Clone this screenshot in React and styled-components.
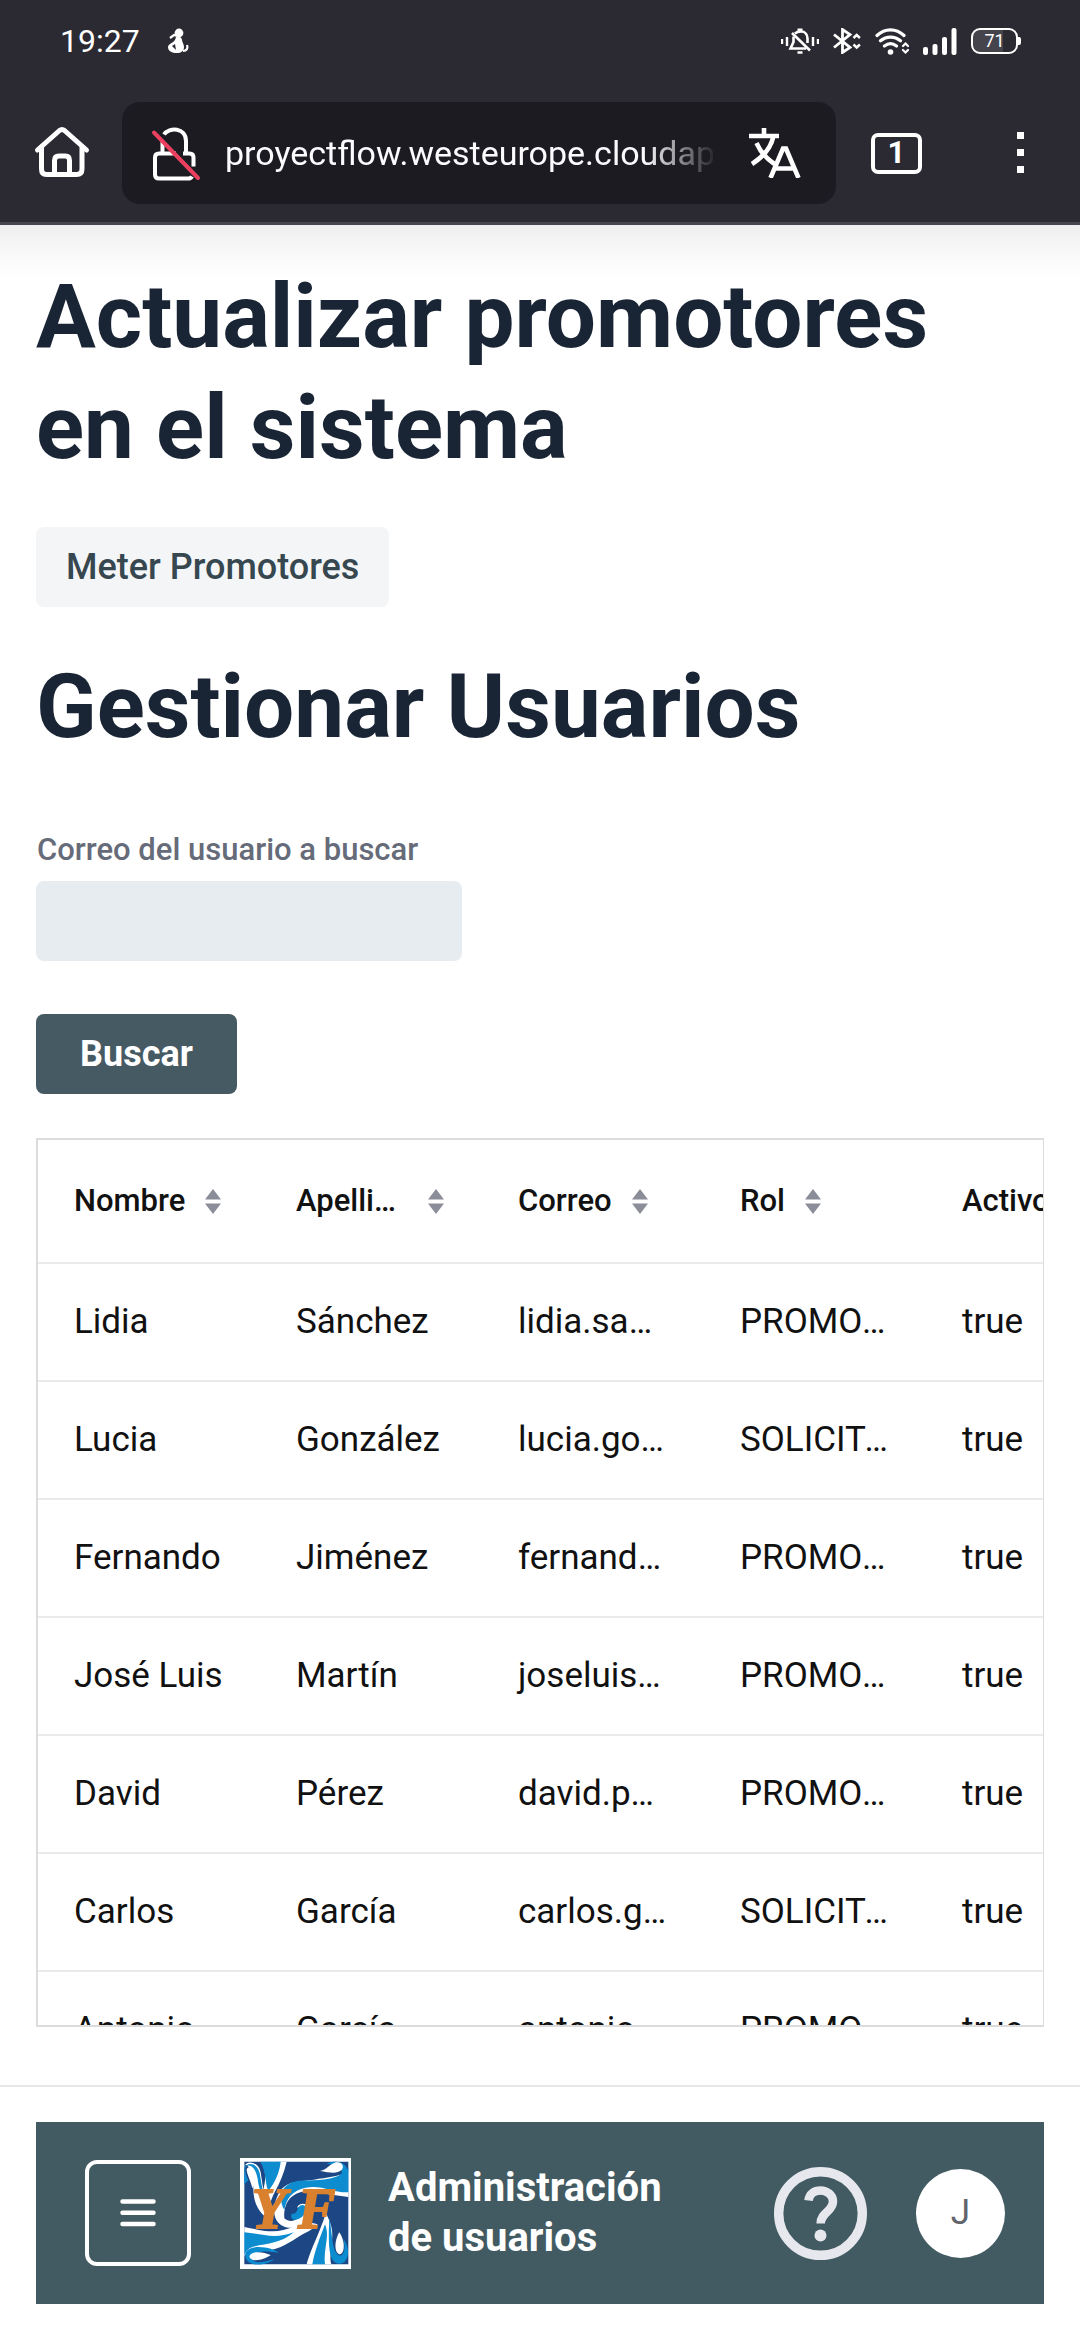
import React from "react";
import styled, { createGlobalStyle } from "styled-components";

const GlobalStyle = createGlobalStyle`
  *, *::before, *::after { box-sizing: border-box; }
  html, body { margin: 0; padding: 0; }
  body {
    background: #fff;
    color: #111;
    font-family: Roboto, "Noto Sans", sans-serif;
  }
  button, input { font-family: inherit; margin: 0; }
`;

const Screen = styled.div`
  display: flex;
  flex-direction: column;
  height: 100vh;
  overflow: hidden;
`;

/* Browser chrome */
const Chrome = styled.header`
  flex: none;
  background: #2b2a33;
  border-bottom: 3px solid #46454d;
  color: #fff;
`;

const StatusBar = styled.div`
  display: flex;
  align-items: center;
  justify-content: space-between;
  height: 82px;
  padding: 0 59px 0 60px;
`;

const StatusGroup = styled.div`
  display: flex;
  align-items: center;
  gap: ${(p) => p.$gap}px;
`;

const Clock = styled.time`
  font-size: 32px;
  line-height: 40px;
`;

const Battery = styled.span`
  display: flex;
  align-items: center;
  &::after {
    content: "";
    width: 3px;
    height: 8px;
    background: #fff;
    border-radius: 0 2px 2px 0;
  }
`;

const BatteryCell = styled.span`
  display: flex;
  align-items: center;
  justify-content: center;
  width: 47px;
  height: 26px;
  border: 2px solid #fff;
  border-radius: 9px;
  background: linear-gradient(90deg, #45444c 70%, #2b2a33 70%);
  font-size: 18px;
  line-height: 20px;
`;

const Toolbar = styled.div`
  display: flex;
  align-items: center;
  padding: 20px 55px 18px 32px;
`;

const IconButton = styled.button`
  display: flex;
  flex: none;
  align-items: center;
  justify-content: center;
  padding: 0;
  border: 0;
  background: none;
  color: inherit;
`;

const AddressBar = styled.div`
  display: flex;
  flex: 1;
  align-items: center;
  min-width: 0;
  height: 102px;
  margin: 0 35px 0 30px;
  padding: 0 35px 0 28px;
  border-radius: 18px;
  background: #1c1b22;
`;

const AddressInput = styled.input`
  flex: 1;
  min-width: 0;
  margin: 0 36px 0 23px;
  padding: 0;
  border: 0;
  outline: 0;
  background: none;
  color: #fbfbfe;
  font-size: 34px;
  line-height: 44px;
  mask-image: linear-gradient(90deg, #000 86%, transparent 101%);
`;

const TabButton = styled(IconButton)`
  width: 51px;
  height: 41px;
  margin-right: 95px;
  border: 4px solid #fff;
  border-radius: 7px;
  font-size: 31px;
  font-weight: 700;
  line-height: 32px;
`;

/* Page */
const Main = styled.main`
  display: flex;
  flex: 1;
  flex-direction: column;
  align-items: flex-start;
  min-height: 0;
  padding: 36px 36px 58px;
  background: linear-gradient(#eee 0, #f6f6f6 20px, #fcfcfc 40px, #fff 56px);
`;

const Title = styled.h1`
  margin: 0;
  color: #192434;
  font-size: 89px;
  font-weight: 700;
  line-height: 111px;
`;

const Button = styled.button`
  height: 80px;
  padding: 0 ${(p) => (p.$primary ? 44 : 30)}px;
  border: 0;
  border-radius: 8px;
  background: ${(p) => (p.$primary ? "#465a64" : "#f3f5f7")};
  color: ${(p) => (p.$primary ? "#fff" : "#37474f")};
  font-size: 36px;
  font-weight: ${(p) => (p.$primary ? 700 : 500)};
  line-height: 44px;
`;

const ImportForm = styled.div`
  margin: 44px 0;
`;

const SearchForm = styled.form`
  display: flex;
  flex-direction: column;
  align-items: flex-start;
  margin: 68px 0 44px;
`;

const Label = styled.label`
  padding-left: 1px;
  color: #666b79;
  font-size: 31px;
  font-weight: 500;
  line-height: 40px;
`;

const TextField = styled.input`
  width: 426px;
  height: 80px;
  margin: 11px 0 53px;
  padding: 0 20px;
  border: 0;
  border-radius: 8px;
  background: #e7ecf0;
  font-size: 36px;
`;

const GridFrame = styled.div`
  flex: 1;
  align-self: stretch;
  min-height: 0;
  overflow: hidden;
  border: 2px solid #dcdcdd;
  border-right-width: 1px;
  background: #fff;
`;

const Grid = styled.table`
  width: 1110px;
  border-collapse: separate;
  border-spacing: 0;
  table-layout: fixed;
`;

const HeadCell = styled.th`
  height: 124px;
  padding: 0 36px;
  border-bottom: 2px solid #e9eaec;
  font-size: 31px;
  font-weight: 500;
  line-height: 40px;
  text-align: left;
`;

const Sorter = styled.span`
  display: flex;
  align-items: center;
  gap: 20px;
  padding-right: 2px;
`;

const HeadText = styled.span`
  overflow: hidden;
  text-overflow: ellipsis;
  white-space: nowrap;
`;

const Cell = styled.td`
  height: 118px;
  padding: 0 36px;
  overflow: hidden;
  border-bottom: 2px solid #e9eaec;
  font-size: 35px;
  line-height: 44px;
  text-overflow: ellipsis;
  white-space: nowrap;
`;

/* Bottom navigation */
const Footer = styled.footer`
  flex: none;
  padding: 35px 36px 36px;
  border-top: 2px solid #e6e7e9;
`;

const NavBar = styled.nav`
  display: flex;
  align-items: center;
  height: 182px;
  padding: 0 39px 0 49px;
  background: #425a62;
  color: #fff;
`;

const MenuButton = styled(IconButton)`
  width: 106px;
  height: 106px;
  margin-right: 49px;
  border: 4px solid #fff;
  border-radius: 12px;
`;

const ViewTitle = styled.h2`
  flex: 1;
  max-width: 300px;
  margin: 0 auto 0 37px;
  font-size: 40px;
  font-weight: 700;
  line-height: 50px;
`;

const Avatar = styled.button`
  flex: none;
  width: 89px;
  height: 89px;
  margin-left: 49px;
  padding: 0;
  border: 0;
  border-radius: 50%;
  background: #fff;
  color: #62646b;
  font-size: 35px;
  line-height: 44px;
`;

const FigureIcon = () => (
  <svg width="22" height="26" viewBox="0 0 22 26" fill="#fff">
    <circle cx="12" cy="5" r="4.4" />
    <path d="M9 9c3-1 6 0 6 3 0 2 2 4 2 7 0 4-3 6-7 6-5 0-9-2-9-6 0-3 5-4 7-7z" />
    <path d="M3 10l4-3 3 1M16 23c4 0 5-3 4-6" fill="none" stroke="#fff" strokeWidth="2.2" />
    <path d="M5 18l3-2 1 6z" fill="#2b2a33" />
  </svg>
);

const MutedBellIcon = () => (
  <svg width="38" height="26" viewBox="0 0 38 26" fill="none" stroke="#fff" strokeWidth="2.600">
    <path d="M1 11v5M6 9v9M32 9v9M37 11v5" strokeWidth="2.400" />
    <path d="M14 5.500c2-2 4-2 6-2 4 0 6.500 3 6.500 7V15M12.500 8.500V14L9.500 20.500H25" />
    <path d="M11 5l18 17.500" />
    <path d="M16.500 1.800h5M16.500 24.500h5" strokeWidth="2.600" />
  </svg>
);

const BluetoothIcon = () => (
  <svg width="28" height="26" viewBox="0 0 28 26" fill="none" stroke="#fff" strokeWidth="2.800">
    <path d="M1 6.500l16 13L9.500 24.500V1.500L17 6.500 1 19.500" />
    <path d="M20.500 10l3.200-3 3.200 3M20.500 16.500l3.200 3 3.200-3" strokeWidth="2.400" />
  </svg>
);

const WifiIcon = () => (
  <svg width="34" height="27" viewBox="0 0 34 27" fill="none" stroke="#fff" strokeWidth="3.200" strokeLinecap="round">
    <path d="M2 7.500C10 0 21 0 29 7.500M5.500 12.800c6-5 14-5 20 0M9.500 18c4-3.200 8-3.200 12 0" />
    <circle cx="15.500" cy="24" r="2.800" fill="#fff" stroke="none" />
    <path d="M28 18l2.500-2.500L33 18M28 22l2.500 2.500L33 22" strokeWidth="2.200" />
  </svg>
);

const SignalIcon = () => (
  <svg width="34" height="27" viewBox="0 0 34 27" fill="#fff">
    <rect x="0" y="19" width="5" height="8" rx="2" />
    <rect x="9.500" y="16" width="5" height="11" rx="2" />
    <rect x="19" y="9" width="5" height="18" rx="2" />
    <rect x="28.500" y="0" width="5" height="27" rx="2" />
  </svg>
);

const HomeIcon = () => (
  <svg width="60" height="56" viewBox="0 0 60 56" fill="none" stroke="#fff" strokeWidth="5" strokeLinecap="round" strokeLinejoin="round">
    <path d="M5.500 25L27.500 5.500Q30 3.500 32.500 5.500L54.500 25" />
    <path d="M9.500 22v22Q9.500 49.500 14.500 49.500h30Q50 49.500 50 44V22" />
    <path d="M22.500 49V35.500Q22.500 31 27 31h6.500Q37.500 31 37.500 35.500V49" />
  </svg>
);

const InsecureLockIcon = () => (
  <svg width="52" height="56" viewBox="0 0 52 56" fill="none" stroke="#fff" strokeWidth="4" strokeLinecap="butt">
    <path d="M14 9.500C19 2 36 2 36 16v12" />
    <path d="M12.500 16v12M26 28.500H9q-4 0-4 4v17q0 4 4 4h29q3 0 4-2M33 28.500h6.500q4 0 4 4v9" />
    <path d="M4 7.500L48 53" stroke="#e9405f" strokeLinecap="round" />
  </svg>
);

const TranslateIcon = () => (
  <svg width="52" height="50" viewBox="0 0 52 50" fill="none" stroke="#fff" strokeWidth="4.600">
    <path d="M0 8h30M15 0v8M24.500 8C22 20 14 29 3 36M7.500 15c4 9 9 15 18 21" />
    <path d="M21.500 50L34 20.500h3L49.500 50M27 40.500h17" />
  </svg>
);

const DotsIcon = () => (
  <svg width="8" height="42" viewBox="0 0 8 42" fill="#fff">
    <rect width="7" height="7" y="0" />
    <rect width="7" height="7" y="17" />
    <rect width="7" height="7" y="34" />
  </svg>
);

const SortGlyph = styled.svg`
  flex: none;
  width: 16px;
  height: 25px;
  fill: #8b8e98;
`;

const SortIcon = () => (
  <SortGlyph viewBox="0 0 16 25">
    <path d="M8 0l8 10.500H0zM8 25l8-10.500H0z" />
  </SortGlyph>
);

const MenuIcon = () => (
  <svg width="36" height="28" viewBox="0 0 36 28" stroke="#fff" strokeWidth="4.500" strokeLinecap="round">
    <path d="M2.500 2.500h31M2.500 13.800h31M2.500 25h31" />
  </svg>
);

const HelpIcon = () => (
  <svg width="93" height="93" viewBox="0 0 93 93" fill="none" stroke="#e6e8ee">
    <circle cx="46.500" cy="46.500" r="41.800" strokeWidth="9.400" />
    <path d="M34.500 33.500c1-7 6-10 12-10s12.500 4 12.500 11c0 10-12.300 11-12.300 22" strokeWidth="8.600" />
    <circle cx="46.500" cy="68.500" r="6" fill="#e6e8ee" stroke="none" />
  </svg>
);

const Logo = () => (
  <svg width="111" height="111" viewBox="30 39 333 333" role="img" aria-label="YF">
    <path fill="#fff" d="M30 39h333v333H30z" />
    <path fill="#1c4784" d="M43 50h312v308H43z" />
    <path fill="#fff" d="M43 64C50 44 86 50 92 82l8 52c6-26 12-54-8-84h78c-8 34-20 62-34 88-18 34-26 66-8 92-38-20-58-50-58-100 0-26-2-46-14-64-6-8-12-8-14-2z" />
    <path fill="#0d8ccf" d="M92 50h60c-4 34-16 60-36 86-10-8-6-52-24-86zM43 70c4-18 38-20 46 14l12 70c-12-16-16-36-18-52-4-28-20-48-34-38-6 6-4 20 6 42l-12 12z" />
    <path fill="#fff" d="M50 72c8-14 24 2 25 24 1 18-2 24-8 34-2-16-18-44-17-58z" />
    <path fill="#fff" d="M150 138c26-34 66-28 102-34 42-8 66-8 103-24v76l-60-8c-42-10-76-18-108 6-20 16-26 40-24 66 20 18 46 2 54-16 6-14-6-20-16-16 10-22 42-10 40 14-2 30-32 50-66 46-42-6-58-52-25-110z" />
    <path fill="#0d8ccf" d="M160 132c24-30 58-24 90-26 44-2 84-8 105-38v74c-46 2-80-24-128-14-40 8-58 32-64 66-12-16-12-44-3-62zM185 206c22 4 12-24 32-26 24 2 10 40-20 44-12 0-16-8-12-18z" />
    <path fill="#0d8ccf" d="M290 56c36-16 70 4 60 30-8 16-26 24-44 26-12-6 14-10 26-22 12-16-8-32-42-34z" />
    <path fill="#fff" d="M270 78c24-4 26-20 48-26 20-2 26 14 16 24-14 12-38 6-64 2z" />
    <path fill="#fff" d="M43 246c52 10 96 24 150-2 26-12 52-12 70-6-12 16-40 26-62 40-34 22-62 38-104 40-22 0-38 0-54 14z" />
    <path fill="#0d8ccf" d="M43 262c52 4 90 22 148 0-40 36-92 34-124 44-12 4-20 14-24 24z" />
    <path fill="#0d8ccf" d="M46 324c14-30 86-16 100 0-20-4-46-6-62-2-16 4-24 16-12 26 10 8 38 2 62-6-26 22-94 28-88-18z" />
    <path fill="#fff" d="M58 334c6-18 42-14 64-4-14 12-60 26-64 4z" />
    <path fill="#fff" d="M288 204c14 32 22 46 18 82-2 26-8 56-2 72h-74c12-46 34-82 58-154z" />
    <path fill="#0d8ccf" d="M285 238c16 38-6 72 0 120h-38c8-44 24-82 38-120zM298 220c10 48 6 88 24 108 14 14 28-10 18-46 24 28 16 74-12 74-32 0-34-52-30-136z" />
    <path fill="#fff" d="M328 262c16 22 18 58 4 66-18 2-22-36-4-66z" />
    <text x="66 204" y="248" fill="#d9812e" stroke="#d9812e" strokeWidth="6" fontFamily="'Liberation Serif', serif" fontSize="168" fontStyle="italic" fontWeight="700">YF</text>
  </svg>
);

const columns = ["Nombre", "Apellidos", "Correo", "Rol", "Activo"];

const users = [
  ["Lidia", "Sánchez", "lidia.sanchez", "PROMOTOR", "true"],
  ["Lucia", "González", "lucia.gonzalez", "SOLICITANTE", "true"],
  ["Fernando", "Jiménez", "fernando.jimenez", "PROMOTOR", "true"],
  ["José Luis", "Martín", "joseluis.martin", "PROMOTOR", "true"],
  ["David", "Pérez", "david.perez", "PROMOTOR", "true"],
  ["Carlos", "García", "carlos.garcia", "SOLICITANTE", "true"],
  ["Antonio", "García", "antonio.garcia", "PROMOTOR", "true"],
];

export default function App() {
  return (
    <Screen>
      <GlobalStyle />
      <Chrome>
        <StatusBar>
          <StatusGroup $gap={27}>
            <Clock>19:27</Clock>
            <FigureIcon />
          </StatusGroup>
          <StatusGroup $gap={14}>
            <MutedBellIcon />
            <BluetoothIcon />
            <WifiIcon />
            <SignalIcon />
            <Battery>
              <BatteryCell>71</BatteryCell>
            </Battery>
          </StatusGroup>
        </StatusBar>
        <Toolbar>
          <IconButton aria-label="Inicio">
            <HomeIcon />
          </IconButton>
          <AddressBar>
            <InsecureLockIcon />
            <AddressInput
              aria-label="Dirección"
              defaultValue="proyectflow.westeurope.cloudapp.azure.com"
            />
            <IconButton aria-label="Traducir">
              <TranslateIcon />
            </IconButton>
          </AddressBar>
          <TabButton aria-label="Pestañas">1</TabButton>
          <IconButton aria-label="Más opciones">
            <DotsIcon />
          </IconButton>
        </Toolbar>
      </Chrome>

      <Main>
        <Title>Actualizar promotores en el sistema</Title>
        <ImportForm>
          <Button type="button">Meter Promotores</Button>
        </ImportForm>
        <Title>Gestionar Usuarios</Title>
        <SearchForm onSubmit={(e) => e.preventDefault()}>
          <Label htmlFor="email">Correo del usuario a buscar</Label>
          <TextField id="email" type="text" />
          <Button type="submit" $primary>
            Buscar
          </Button>
        </SearchForm>
        <GridFrame>
          <Grid>
            <thead>
              <tr>
                {columns.map((name) => (
                  <HeadCell key={name} scope="col">
                    <Sorter>
                      <HeadText>{name}</HeadText>
                      <SortIcon />
                    </Sorter>
                  </HeadCell>
                ))}
              </tr>
            </thead>
            <tbody>
              {users.map((user) => (
                <tr key={user[2]}>
                  {user.map((value, i) => (
                    <Cell key={columns[i]}>{value}</Cell>
                  ))}
                </tr>
              ))}
            </tbody>
          </Grid>
        </GridFrame>
      </Main>

      <Footer>
        <NavBar>
          <MenuButton aria-label="Menú">
            <MenuIcon />
          </MenuButton>
          <Logo />
          <ViewTitle>Administración de usuarios</ViewTitle>
          <IconButton aria-label="Ayuda">
            <HelpIcon />
          </IconButton>
          <Avatar>J</Avatar>
        </NavBar>
      </Footer>
    </Screen>
  );
}
